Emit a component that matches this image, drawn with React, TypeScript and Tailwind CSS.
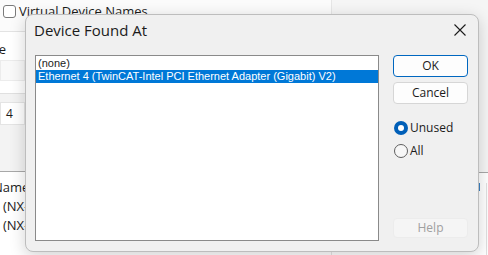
import React from "react";

const ui = { fontFamily: '"Open Sans", "Noto Sans", Arial, sans-serif' };
const list = { fontFamily: '"Liberation Sans", Arial, sans-serif' };

function Backdrop() {
  return (
    <div className="flex h-[255px] w-[488px] bg-white text-[13px] text-[#1b1b1b]" style={ui}>
      <div className="flex w-[331px] flex-col overflow-hidden">
        <div className="flex h-[32px] items-start gap-[3px] border-b border-[#e3e3e3] bg-[#fbfbfb] pl-[3px] pt-[5px]">
          <span className="h-[13px] w-[13px] rounded-[3px] border border-[#7a7a7a] bg-white" />
          <span className="-mt-[2px] leading-[16px]">Virtual Device Names</span>
        </div>
        <div className="flex h-[62px] flex-col border-b border-[#e0e0e0] bg-white">
          <span className="-ml-[23px] mt-[9px] leading-[16px]">Type</span>
          <span className="mt-[3px] h-[21px] w-[25px] border border-[#ececec] bg-[#f9f9f9]" />
        </div>
        <div className="flex h-[78px] flex-col border-b border-[#a8a8a8] bg-[#f3f3f3]">
          <span className="mt-[8px] flex h-[23px] w-[25px] items-center border border-[#e4e4e4] bg-white pl-[5px] text-[12px]">4</span>
        </div>
        <div className="flex flex-col pt-[6px] leading-[19px]">
          <span className="-ml-[7px]">Name</span>
          <span className="pl-[3px]">(NX-ECC</span>
          <span className="pl-[3px]">(NX-ECC</span>
        </div>
      </div>
      <div className="flex flex-1 flex-col border-l border-[#e6e6e6]">
        <div className="h-[173px] border-b border-[#a8a8a8] bg-[#f5f5f5]" />
        <div className="flex flex-1 justify-end pr-[1px] pt-[10px]">
          <span className="mr-[6px] h-[8px] w-[2px] bg-[#3b82c4]" />
          <span className="h-full w-px bg-[#e0e0e0]" />
        </div>
      </div>
    </div>
  );
}

function Radio({ label, checked }: { label: string; checked?: boolean }) {
  return (
    <div className="flex h-[14px] items-center gap-[2px]">
      {checked ? (
        <span className="flex h-[14px] w-[14px] items-center justify-center rounded-full bg-[#005fb8]">
          <span className="h-[6px] w-[6px] rounded-full bg-white" />
        </span>
      ) : (
        <span className="h-[14px] w-[14px] rounded-full border border-[#5f5f5f] bg-[#f7f7f7]" />
      )}
      <span className="text-[12px] leading-[14px] text-[#1b1b1b]">{label}</span>
    </div>
  );
}

function Dialog() {
  return (
    <div
      className="absolute left-[25px] top-[14px] flex h-[238px] w-[454px] flex-col rounded-[8px] border border-[#bdbdbd] bg-[#f0f0f0] shadow-[0_4px_16px_rgba(0,0,0,0.18)]"
      style={ui}
    >
      <div className="flex h-[40px] items-start justify-between pl-[8px] pr-[9px] pt-[5px]">
        <span className="text-[15px] leading-[20px] text-[#1b1b1b]">Device Found At</span>
        <svg width="14" height="14" viewBox="0 0 14 14" className="mt-[3px] mr-[2px]">
          <path d="M1.5 1.5 L12.5 12.5 M12.5 1.5 L1.5 12.5" stroke="#1b1b1b" strokeWidth="1.1" />
        </svg>
      </div>
      <div className="flex flex-1 pb-[10px] pl-[9px]">
        <div className="flex w-[344px] flex-col border border-[#8a8a8a] bg-white pt-[1px] text-[11px] leading-[13px] text-[#1b1b1b]" style={list}>
          <span className="h-[13px] pl-[2px]">(none)</span>
          <span className="h-[13px] whitespace-nowrap bg-[#0078d7] pl-[2px] text-white">
            Ethernet 4 (TwinCAT-Intel PCI Ethernet Adapter (Gigabit) V2)
          </span>
        </div>
        <div className="ml-[14px] flex w-[75px] flex-col">
          <button className="h-[22px] rounded-[4px] border border-[#0067c0] bg-[#fdfdfd] text-[12px] text-[#1b1b1b]">OK</button>
          <button className="mt-[5px] h-[22px] rounded-[4px] border border-[#d6d6d6] bg-[#fdfdfd] text-[12px] text-[#1b1b1b]">Cancel</button>
          <div className="ml-[1px] mt-[17px] flex flex-col gap-[9px]">
            <Radio label="Unused" checked />
            <Radio label="All" />
          </div>
          <div className="flex-1" />
          <button className="mb-[3px] h-[20px] rounded-[4px] border border-[#ececec] bg-[#f5f5f5] text-[12px] text-[#a0a0a0]">Help</button>
        </div>
      </div>
    </div>
  );
}

export default function App() {
  return (
    <div className="relative h-[255px] w-[488px] overflow-hidden">
      <Backdrop />
      <Dialog />
    </div>
  );
}
